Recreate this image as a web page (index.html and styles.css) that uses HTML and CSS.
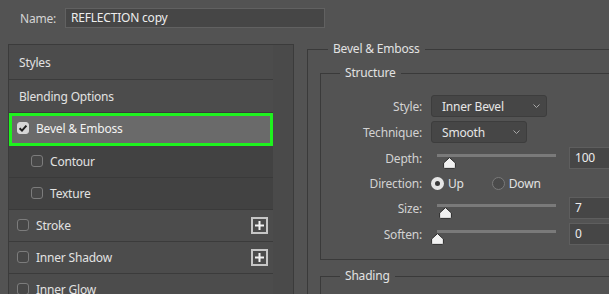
FILE: index.html
```html
<!DOCTYPE html>
<html lang="en">
<head>
    <meta charset="UTF-8">
    <meta name="viewport" content="width=device-width, initial-scale=1.0">
    <title>Layer Style</title>
    <link rel="stylesheet" href="styles.css">
</head>
<body>
    <div class="dialog">
        <div class="name-row">
            <span class="name-label">Name:</span>
            <div class="name-input">REFLECTION copy</div>
        </div>

        <div class="main">
            <!-- Effects list -->
            <div class="styles-panel">
                <ul class="style-list">
                    <li class="style-item heading styles-row">Styles</li>
                    <li class="style-item heading blend-row">Blending Options</li>
                    <li class="style-item selected">
                        <span class="check checked">
                            <svg width="12" height="12" viewBox="0 0 12 12"><path d="M2.6 6.2 L5 8.6 L9.4 3.6" fill="none" stroke="#1e1e1e" stroke-width="2"/></svg>
                        </span>
                        Bevel &amp; Emboss
                    </li>
                    <li class="style-item sub"><span class="check"></span>Contour</li>
                    <li class="style-item sub"><span class="check"></span>Texture</li>
                    <li class="style-item">
                        <span class="check"></span>Stroke
                        <span class="add">
                            <svg width="17" height="17" viewBox="0 0 17 17"><rect x="1" y="1" width="15" height="15" fill="none" stroke="#c6c6c6" stroke-width="2"/><path d="M8.5 4 V13 M4 8.5 H13" stroke="#f2f2f2" stroke-width="2"/></svg>
                        </span>
                    </li>
                    <li class="style-item">
                        <span class="check"></span>Inner Shadow
                        <span class="add">
                            <svg width="17" height="17" viewBox="0 0 17 17"><rect x="1" y="1" width="15" height="15" fill="none" stroke="#c6c6c6" stroke-width="2"/><path d="M8.5 4 V13 M4 8.5 H13" stroke="#f2f2f2" stroke-width="2"/></svg>
                        </span>
                    </li>
                    <li class="style-item"><span class="check"></span>Inner Glow</li>
                </ul>
                <div class="scrollbar"></div>
            </div>

            <!-- Bevel & Emboss settings -->
            <fieldset class="group effect">
                <legend>Bevel &amp; Emboss</legend>

                <fieldset class="group structure">
                    <legend>Structure</legend>
                    <div class="fields">
                        <div class="field-row">
                            <span class="field-label">Style:</span>
                            <div class="select wide">Inner Bevel
                                <svg class="chevron" width="7" height="4" viewBox="0 0 7 4"><path d="M0.5 0.5 L3.5 3.5 L6.5 0.5" fill="none" stroke="#a8a8a8"/></svg>
                            </div>
                        </div>
                        <div class="field-row">
                            <span class="field-label">Technique:</span>
                            <div class="select narrow">Smooth
                                <svg class="chevron" width="7" height="4" viewBox="0 0 7 4"><path d="M0.5 0.5 L3.5 3.5 L6.5 0.5" fill="none" stroke="#a8a8a8"/></svg>
                            </div>
                        </div>
                        <div class="field-row">
                            <span class="field-label">Depth:</span>
                            <div class="slider">
                                <div class="track"></div>
                                <svg class="thumb" style="left: 10%" width="13" height="12" viewBox="0 0 13 12"><path d="M6.5 0.6 L12.4 6 V10.4 Q12.4 11.4 11.4 11.4 H1.6 Q0.6 11.4 0.6 10.4 V6 Z" fill="#f1f1f1" stroke="#2c2c2c" stroke-width="1"/></svg>
                            </div>
                            <div class="value">100</div>
                        </div>
                        <div class="field-row radio-row">
                            <span class="field-label">Direction:</span>
                            <span class="radio-option">
                                <span class="radio on"></span>Up
                            </span>
                            <span class="radio-option">
                                <span class="radio"></span>Down
                            </span>
                        </div>
                        <div class="field-row">
                            <span class="field-label">Size:</span>
                            <div class="slider">
                                <div class="track"></div>
                                <svg class="thumb" style="left: 7%" width="13" height="12" viewBox="0 0 13 12"><path d="M6.5 0.6 L12.4 6 V10.4 Q12.4 11.4 11.4 11.4 H1.6 Q0.6 11.4 0.6 10.4 V6 Z" fill="#f1f1f1" stroke="#2c2c2c" stroke-width="1"/></svg>
                            </div>
                            <div class="value">7</div>
                        </div>
                        <div class="field-row">
                            <span class="field-label">Soften:</span>
                            <div class="slider">
                                <div class="track"></div>
                                <svg class="thumb" style="left: 0%" width="13" height="12" viewBox="0 0 13 12"><path d="M6.5 0.6 L12.4 6 V10.4 Q12.4 11.4 11.4 11.4 H1.6 Q0.6 11.4 0.6 10.4 V6 Z" fill="#f1f1f1" stroke="#2c2c2c" stroke-width="1"/></svg>
                            </div>
                            <div class="value">0</div>
                        </div>
                    </div>
                </fieldset>

                <fieldset class="group shading">
                    <legend>Shading</legend>
                </fieldset>
            </fieldset>
        </div>
    </div>
</body>
</html>
```

FILE: styles.css
```css
* {
    box-sizing: border-box;
}
html, body {
    margin: 0;
    height: 100%;
}
body {
    background: #535353;
    font-family: "Noto Sans", "Liberation Sans", sans-serif;
    font-size: 12px;
    letter-spacing: -0.2px;
    color: #e2e2e2;
    overflow: hidden;
}
.dialog {
    padding: 8px 0 0 8px;
    width: 720px;
}

/* name */
.name-row {
    display: flex;
    align-items: center;
    height: 20px;
    margin-left: 12px;
}
.name-label {
    width: 45px;
    color: #d4d4d4;
}
.name-input {
    width: 260px;
    height: 20px;
    padding: 0 5px;
    line-height: 18px;
    background: #464646;
    border: 1px solid #616161;
    color: #ededed;
}

.main {
    display: flex;
    align-items: flex-start;
    margin-top: 16px;
}

/* left list */
.styles-panel {
    display: flex;
    width: 286px;
    height: 300px;
    border: 1px solid #3b3b3b;
    border-bottom: none;
}
.style-list {
    list-style: none;
    margin: 0;
    padding: 0;
    width: 264px;
    background: #4c4c4c;
}
.style-item {
    display: flex;
    align-items: center;
    height: 32px;
    padding-left: 8px;
    padding-bottom: 1px;
    border-bottom: 1px solid #3b3b3b;
}
.style-item.heading {
    padding-left: 10px;
    padding-bottom: 0;
}
.styles-row {
    height: 35px;
}
.blend-row {
    height: 33px;
}
.style-item.selected {
    height: 33px;
    padding-left: 5px;
    padding-bottom: 3px;
    background: #6a6a6a;
    border: 3px solid #1ef21e;
    color: #f2f2f2;
}
.style-item.sub {
    padding-left: 22px;
    background: #424242;
    border-bottom-color: #3a3a3a;
}
.check {
    display: inline-flex;
    width: 12px;
    height: 12px;
    margin-right: 7px;
    border: 1px solid #7c7c7c;
    border-radius: 3px;
    background: #474747;
}
.check.checked {
    background: #d6d6d6;
    border-color: #d6d6d6;
}
.check svg {
    margin: -1px;
}
.add {
    display: flex;
    margin-left: auto;
    margin-right: 5px;
}
.scrollbar {
    width: 20px;
    background: #4a4a4a;
}

/* groups */
.group {
    margin: 0;
    min-width: 0;
    border: 1px solid #3a3a3a;
}
.group legend {
    padding: 0 5px;
    line-height: 16px;
    color: #e2e2e2;
}
.effect {
    width: 340px;
    height: 300px;
    margin: -3px 0 0 13px;
    padding: 0 0 0 12px;
    border-right: none;
    border-bottom: none;
}
.effect > legend {
    margin-left: 8px;
}
.structure {
    width: 330px;
    margin-top: 8px;
    padding: 14px 0 14px;
    border-right: none;
}
.structure > legend,
.shading > legend {
    margin-left: 19px;
}
.shading {
    width: 330px;
    height: 60px;
    margin-top: 8px;
    padding: 0;
    border-right: none;
    border-bottom: none;
}

/* fields */
.fields {
    display: flex;
    flex-direction: column;
    gap: 4px;
}
.field-row {
    display: flex;
    align-items: center;
    height: 22px;
}
.field-row.radio-row {
    height: 20px;
}
.field-label {
    flex: none;
    width: 101px;
    text-align: right;
    color: #d2d2d2;
}
.select {
    display: flex;
    align-items: center;
    justify-content: space-between;
    height: 22px;
    margin-left: 9px;
    padding: 0 6px 0 10px;
    background: #464646;
    border: 1px solid #3d3d3d;
    border-radius: 3px;
    color: #e6e6e6;
}
.select.wide {
    width: 116px;
}
.select.narrow {
    width: 96px;
}
.slider {
    position: relative;
    flex: none;
    width: 119px;
    height: 22px;
    margin-left: 15px;
}
.track {
    height: 3px;
    margin-top: 7px;
    background: #7a7a7a;
}
.thumb {
    position: absolute;
    top: 10px;
    margin-left: -6px;
}
.value {
    flex: none;
    width: 60px;
    height: 22px;
    margin-left: 13px;
    padding-left: 5px;
    line-height: 20px;
    background: #464646;
    border: 1px solid #5e5e5e;
    color: #ececec;
}
.radio-option {
    display: flex;
    align-items: center;
    margin-left: 9px;
    margin-right: 19px;
    color: #e2e2e2;
}
.radio {
    width: 13px;
    height: 13px;
    margin-right: 4px;
    border: 1px solid #7a7a7a;
    border-radius: 50%;
    background: #4a4a4a;
}
.radio.on {
    border: 4px solid #e6e6e6;
    background: #3a3a3a;
}
```
